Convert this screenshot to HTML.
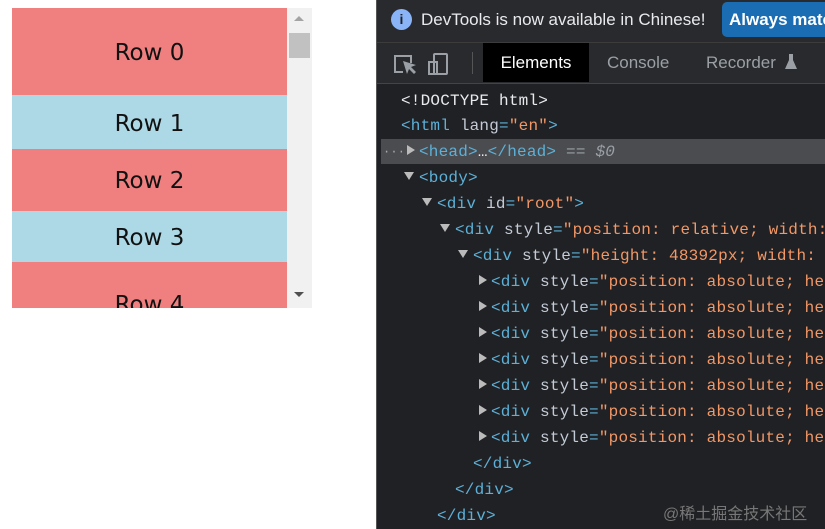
<!DOCTYPE html>
<html><head><style>
body{margin:0;width:825px;height:529px;background:#fff;position:relative;overflow:hidden;font-family:"Liberation Sans",sans-serif}
.r{position:absolute;left:12px;width:275px;text-align:center;font-size:23px;color:#111;font-family:"DejaVu Sans","Liberation Sans",sans-serif;}
.pk{background:#f08080}.bl{background:#add8e6}
#dt{position:absolute;left:376px;top:0;width:449px;height:529px;background:#202124;border-left:1px solid #555;overflow:hidden}
.ln{position:absolute;height:26px;line-height:26px;font-family:"Liberation Mono",monospace;font-size:16px;letter-spacing:0.2px;white-space:pre;color:#e8eaed}
.t{color:#5db0d7}.a{color:#c3cbd6}.v{color:#f29766}.w{color:#e8eaed}
.ar{position:absolute;width:0;height:0}
.rt{border-top:5px solid transparent;border-bottom:5px solid transparent;border-left:8px solid #bbb}
.dn{border-left:5px solid transparent;border-right:5px solid transparent;border-top:8px solid #bbb}
</style></head><body>
<div class="r pk" style="top:8px;height:87px;line-height:90px">Row 0</div>
<div class="r bl" style="top:95px;height:54px;line-height:58px">Row 1</div>
<div class="r pk" style="top:149px;height:62px;line-height:64px">Row 2</div>
<div class="r bl" style="top:211px;height:51px;line-height:54px">Row 3</div>
<div class="r pk" style="top:262px;height:46px;line-height:86px;overflow:hidden">Row 4</div>
<div style="position:absolute;left:287px;top:8px;width:25px;height:300px;background:#f1f1f1"></div>
<div style="position:absolute;left:289px;top:33px;width:21px;height:25px;background:#c1c1c1"></div>
<div class="ar" style="left:294px;top:16px;border-left:5px solid transparent;border-right:5px solid transparent;border-bottom:5px solid #a3a3a3"></div>
<div class="ar" style="left:294px;top:292px;border-left:5px solid transparent;border-right:5px solid transparent;border-top:5px solid #505050"></div>

<div id="dt">
 <div style="position:absolute;left:0;top:0;width:449px;height:42px;background:#292a2d;border-bottom:1px solid #3c3c3c"></div>
 <div style="position:absolute;left:14px;top:9px;width:21px;height:21px;border-radius:50%;background:#8ab4f8;color:#202124;font:bold 14px/21px 'Liberation Sans';text-align:center">i</div>
 <div style="position:absolute;left:44px;top:9px;font-size:17px;color:#e8eaed;line-height:22px">DevTools is now available in Chinese!</div>
 <div style="position:absolute;left:345px;top:2px;width:120px;height:35px;border-radius:5px;background:#1a6db3;color:#fff;font:bold 17px/35px 'Liberation Sans';padding-left:7px">Always match</div>
 <div style="position:absolute;left:0;top:43px;width:449px;height:40px;background:#292a2d;border-bottom:1px solid #444"></div>
 <svg style="position:absolute;left:16px;top:52px" width="64" height="26" viewBox="0 0 64 26" fill="none" stroke="#9aa0a6" stroke-width="2">
  <path d="M10 20H2V4h16v7"/><path d="M10 9l4 13 2-5 5 5 2-2-5-5 5-2z" fill="#9aa0a6" stroke="none"/>
  <rect x="41" y="2" width="13" height="20" rx="1"/><rect x="36" y="10" width="8" height="12"/>
 </svg>
 <div style="position:absolute;left:95px;top:52px;width:1px;height:22px;background:#555"></div>
 <div style="position:absolute;left:106px;top:43px;width:106px;height:39px;background:#000;color:#fff;font-size:17px;line-height:39px;text-align:center">Elements</div>
 <div style="position:absolute;left:230px;top:43px;color:#9aa0a6;font-size:17px;line-height:40px">Console</div>
 <div style="position:absolute;left:329px;top:43px;color:#9aa0a6;font-size:17px;line-height:40px">Recorder</div>
 <svg style="position:absolute;left:407px;top:53px" width="14" height="18"><path d="M4 1h6M5 1v6L1 16h12L9 7V1" fill="#9aa0a6"/></svg>

 <div style="position:absolute;left:4px;top:139px;width:445px;height:25px;background:#4a4c50"></div>
 <div class="ln" style="left:24px;top:88px"><span class="w">&lt;!DOCTYPE html&gt;</span></div>
 <div class="ln" style="left:24px;top:113px"><span class="t">&lt;html </span><span class="a">lang</span><span class="t">=</span><span class="v">"en"</span><span class="t">&gt;</span></div>
 <div class="ln" style="left:6px;top:139px;color:#aaa;font-size:12px">···</div>
 <div class="ar rt" style="left:30px;top:145px"></div>
 <div class="ln" style="left:42px;top:139px"><span class="t">&lt;head&gt;</span><span class="w">…</span><span class="t">&lt;/head&gt;</span><span style="color:#9aa0a6"> == <i>$0</i></span></div>
 <div class="ar dn" style="left:27px;top:172px"></div>
 <div class="ln" style="left:42px;top:165px"><span class="t">&lt;body&gt;</span></div>
 <div class="ar dn" style="left:45px;top:198px"></div>
 <div class="ln" style="left:60px;top:191px"><span class="t">&lt;div </span><span class="a">id</span><span class="t">=</span><span class="v">"root"</span><span class="t">&gt;</span></div>
 <div class="ar dn" style="left:63px;top:224px"></div>
 <div class="ln" style="left:78px;top:217px"><span class="t">&lt;div </span><span class="a">style</span><span class="t">=</span><span class="v">"position: relative; width: 300px</span></div>
 <div class="ar dn" style="left:81px;top:250px"></div>
 <div class="ln" style="left:96px;top:243px"><span class="t">&lt;div </span><span class="a">style</span><span class="t">=</span><span class="v">"height: 48392px; width: 100%</span></div>
 <div class="ar rt" style="left:102px;top:275px"></div>
 <div class="ln" style="left:114px;top:269px"><span class="t">&lt;div </span><span class="a">style</span><span class="t">=</span><span class="v">"position: absolute; height</span></div>
 <div class="ar rt" style="left:102px;top:301px"></div>
 <div class="ln" style="left:114px;top:295px"><span class="t">&lt;div </span><span class="a">style</span><span class="t">=</span><span class="v">"position: absolute; height</span></div>
 <div class="ar rt" style="left:102px;top:327px"></div>
 <div class="ln" style="left:114px;top:321px"><span class="t">&lt;div </span><span class="a">style</span><span class="t">=</span><span class="v">"position: absolute; height</span></div>
 <div class="ar rt" style="left:102px;top:353px"></div>
 <div class="ln" style="left:114px;top:347px"><span class="t">&lt;div </span><span class="a">style</span><span class="t">=</span><span class="v">"position: absolute; height</span></div>
 <div class="ar rt" style="left:102px;top:379px"></div>
 <div class="ln" style="left:114px;top:373px"><span class="t">&lt;div </span><span class="a">style</span><span class="t">=</span><span class="v">"position: absolute; height</span></div>
 <div class="ar rt" style="left:102px;top:405px"></div>
 <div class="ln" style="left:114px;top:399px"><span class="t">&lt;div </span><span class="a">style</span><span class="t">=</span><span class="v">"position: absolute; height</span></div>
 <div class="ar rt" style="left:102px;top:431px"></div>
 <div class="ln" style="left:114px;top:425px"><span class="t">&lt;div </span><span class="a">style</span><span class="t">=</span><span class="v">"position: absolute; height</span></div>
 <div class="ln" style="left:96px;top:451px"><span class="t">&lt;/div&gt;</span></div>
 <div class="ln" style="left:78px;top:477px"><span class="t">&lt;/div&gt;</span></div>
 <div class="ln" style="left:60px;top:503px"><span class="t">&lt;/div&gt;</span></div>
 <div style="position:absolute;left:286px;top:500px;font-family:'Liberation Sans','Noto Sans CJK SC',sans-serif;font-size:16px;color:#777">@稀土掘金技术社区</div>
</div>
</body></html>
